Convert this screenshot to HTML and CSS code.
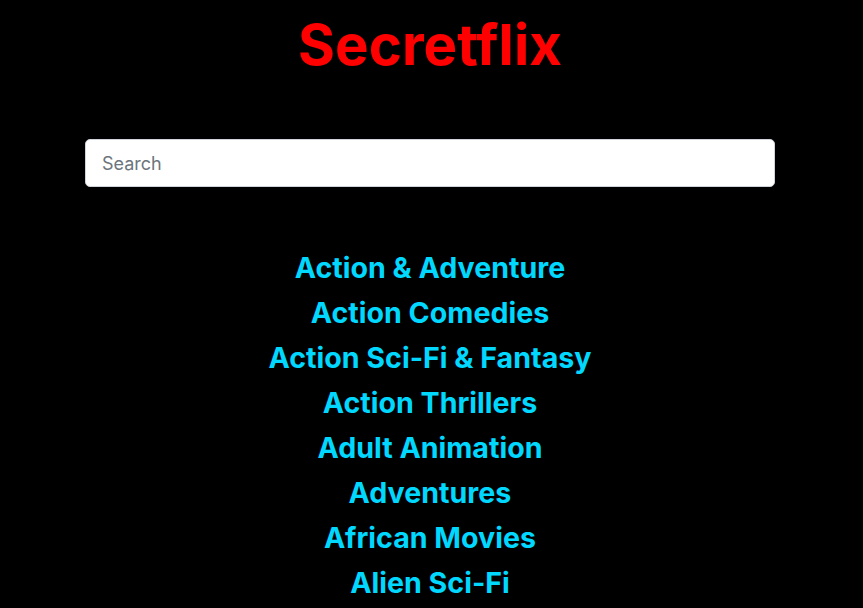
FILE: index.html
```html
<!DOCTYPE html>
<html>
<head>
<meta charset="utf-8">
<link rel="stylesheet" href="styles.css">
</head>
<body>
<div class="container">
  <h1 class="title">Secretflix</h1>
  <input class="search" type="text" placeholder="Search">
  <ul class="genres">
    <li>Action &amp; Adventure</li>
    <li>Action Comedies</li>
    <li>Action Sci-Fi &amp; Fantasy</li>
    <li>Action Thrillers</li>
    <li>Adult Animation</li>
    <li>Adventures</li>
    <li>African Movies</li>
    <li>Alien Sci-Fi</li>
  </ul>
</div>
</body>
</html>
```
FILE: styles.css
```css
html, body {
  margin: 0;
  padding: 0;
  background: #000;
  overflow: hidden;
  height: 608px;
}
body {
  font-family: Inter, "Noto Sans", sans-serif;
}
.container {
  width: 690px;
  margin: 0 0 0 85px;
  display: flex;
  flex-direction: column;
  align-items: center;
}
.title {
  margin: 13px 0 0;
  color: #ff0000;
  font-size: 56.5px;
  font-weight: 700;
  line-height: 64px;
}
.search {
  box-sizing: border-box;
  margin-top: 62px;
  width: 690px;
  height: 48px;
  border: 1px solid #ced4da;
  border-radius: 5px;
  padding: 0 16px;
  font-family: Inter, "Noto Sans", sans-serif;
  font-size: 18px;
  color: #495057;
  background: #fff;
  outline: none;
}
.search::placeholder {
  color: #6c757d;
}
.genres {
  list-style: none;
  margin: 58px 0 0;
  padding: 0;
  text-align: center;
}
.genres li {
  color: #00d8ff;
  font-size: 28.6px;
  font-weight: 700;
  line-height: 45px;
}
```
